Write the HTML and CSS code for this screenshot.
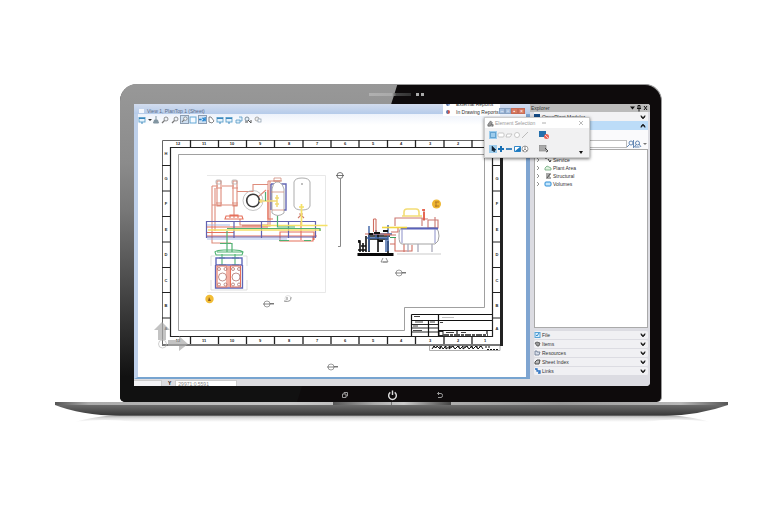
FILE: index.html
```html
<!DOCTYPE html>
<html lang="en">
<head>
<meta charset="utf-8">
<meta name="viewport" content="width=device-width, initial-scale=1">
<title>Plant drawing workspace</title>
<link rel="stylesheet" href="styles.css">
</head>
<body>
<svg class="defs" aria-hidden="true">
  <defs>
    <symbol id="zoom" viewBox="0 0 8 8"><circle cx="5" cy="3" r="2" fill="#eef3f8" stroke="#777" stroke-width=".8"/><path d="M3.500 4.500L1 7" stroke="#777" stroke-width="1.200"/></symbol>
    <symbol id="view" viewBox="0 0 8 8"><rect x="1" y="1.500" width="6" height="4.500" fill="#e8f4fd" stroke="#5b9fcb" stroke-width=".9"/><path d="M1 2.500h6M3 7h2" stroke="#3b87bd"/></symbol>
    <symbol id="chev" viewBox="0 0 6 6"><path d="M1 1.500L3 3.500 5 1.500V3L3 5 1 3z" fill="#111" stroke="#111" stroke-width=".5"/></symbol>
    <symbol id="target" viewBox="0 0 14 8"><circle cx="5" cy="4" r="3" fill="#fff" stroke="#777" stroke-width=".7"/><path d="M1 4h11M8 3.500h4" stroke="#666" stroke-width=".8"/></symbol>
    <symbol id="arrow" viewBox="0 0 4 6"><path d="M1 1l2 2-2 2" fill="none" stroke="#777" stroke-width=".8"/></symbol>
  </defs>
</svg>
<main class="laptop">
  <div class="lid">
    <div class="glare"></div>
    <div class="camera"><span class="speaker"></span><span class="lens"></span><span class="lens"></span></div>
    <div class="screen">
      <div class="desk">
        <section class="window">
          <header class="titlebar"><span class="doc"></span>View 1, PlanTop 1 (Sheet)</header>
          <div class="toolbar">
            <button aria-label="View attributes"><svg><use href="#view"/></svg></button>
            <button class="narrow" aria-label="More views"><svg viewBox="0 0 4 8"><path d="M0 3h4L2 5z" fill="#333"/></svg></button>
            <button aria-label="Brightness"><svg viewBox="0 0 8 8"><path d="M4 0v5M2.500 4h3l1 3h-5z" fill="#8195a1" stroke="#8195a1"/></svg></button>
            <button aria-label="Update view"><svg><use href="#zoom"/></svg></button>
            <button class="gap" aria-label="Zoom in"><svg><use href="#zoom"/></svg></button>
            <button class="on" aria-label="Window area"><svg><use href="#zoom"/></svg></button>
            <button aria-label="Fit view"><svg viewBox="0 0 8 8"><rect x="1" y="1" width="6" height="6" fill="#f4faff" stroke="#65a8d6"/></svg></button>
            <button class="on" aria-label="Rotate view"><svg viewBox="0 0 8 8"><path d="M0 4h3M4 2l2 2-2 2M7 1v5" fill="none" stroke="#2384cf" stroke-width="1.500"/></svg></button>
            <button aria-label="Pan"><svg viewBox="0 0 8 8"><path d="M2 1h2l3 4-2 2-3-1z" fill="#fff" stroke="#666" stroke-width=".8"/></svg></button>
            <button aria-label="Previous view"><svg><use href="#view"/></svg></button>
            <button aria-label="Next view"><svg><use href="#view"/></svg></button>
            <button class="gap" aria-label="Copy view"><svg viewBox="0 0 8 8"><path d="M1 4h4v3H1zM4 1h3v4H5" fill="#dceffc" stroke="#5999c4" stroke-width=".8"/></svg></button>
            <button aria-label="Clip volume"><svg viewBox="0 0 8 8"><circle cx="3" cy="3" r="2" fill="#e4eff8" stroke="#657785" stroke-width=".8"/><path d="M4 4l3 3V4M1 6h3" stroke="#555" fill="none"/></svg></button>
            <button class="gap" aria-label="Clip mask"><svg viewBox="0 0 8 8"><circle cx="3" cy="3" r="2" fill="#eee" stroke="#999" stroke-width=".8"/><rect x="4" y="3" width="3" height="3" fill="#fff" stroke="#89a" stroke-width=".7"/></svg></button>
          </div>
          <svg class="drawing" viewBox="138 125 388 252" role="img" aria-label="Plant sheet drawing">
            <!-- sheet frame -->
            <g fill="none" stroke="#222">
              <path d="M162.500 346V140.500H502" stroke="#666"/>
              <path d="M170.500 147.500H492.500V336.500H170.500z" stroke-width="1.200"/>
              <path d="M162 345H503" stroke="#777" stroke-width="2"/>
              <path d="M501.500 140V346" stroke="#222" stroke-width="3"/>
              <path d="M190.500 140v7M218.500 140v7M246.500 140v7M274.500 140v7M303 140v7M331 140v7M359 140v7M387.500 140v7M415.500 140v7M444 140v7M472 140v7M190.500 337v7M218.500 337v7M246.500 337v7M274.500 337v7M303 337v7M331 337v7M359 337v7M387.500 337v7M415.500 337v7M444 337v7M472 337v7" stroke-width="1.300"/>
              <path d="M162 165.500h8M162 191h8M162 216.500h8M162 242h8M162 267.500h8M162 292.500h8M162 318h8M493 165.500h8M493 191h8M493 216.500h8M493 242h8M493 267.500h8M493 292.500h8M493 318h8"/>
              <path d="M178.500 154.500H484.500V307.500H404.500V330.500H178.500z" stroke="#888" stroke-width=".8"/>
            </g>
            <g class="zone">
              <text x="178" y="145">12</text><text x="204" y="145">11</text><text x="232" y="145">10</text><text x="260" y="145">9</text><text x="289" y="145">8</text><text x="317" y="145">7</text><text x="345" y="145">6</text><text x="373" y="145">5</text><text x="401" y="145">4</text><text x="430" y="145">3</text><text x="458" y="145">2</text><text x="485" y="145">1</text>
              <text x="178" y="342">12</text><text x="204" y="342">11</text><text x="232" y="342">10</text><text x="260" y="342">9</text><text x="289" y="342">8</text><text x="317" y="342">7</text><text x="345" y="342">6</text><text x="373" y="342">5</text><text x="401" y="342">4</text><text x="430" y="342">3</text><text x="458" y="342">2</text><text x="485" y="342">1</text>
              <text x="166" y="155">H</text><text x="166" y="180">G</text><text x="166" y="205">F</text><text x="166" y="231">E</text><text x="166" y="256">D</text><text x="166" y="282">C</text><text x="166" y="307">B</text><text x="166" y="330">A</text>
              <text x="497" y="155">H</text><text x="497" y="180">G</text><text x="497" y="205">F</text><text x="497" y="231">E</text><text x="497" y="256">D</text><text x="497" y="282">C</text><text x="497" y="307">B</text><text x="497" y="330">A</text>
            </g>
            <!-- title block -->
            <g fill="none" stroke="#111">
              <path d="M411.500 314.500H492M411.500 314.500V336M438.500 314.500V336M428.500 320V336M411.500 320.500H438.500M438.500 320.500H492M438.500 330.500H492M457 331v3M487 331v3" stroke-width="1.200"/>
              <path d="M411 324.500h27M411 328h27M411 332h27" stroke-width=".9"/>
              <path d="M414 316.500h6M415 322h8M430 322h5M413 326h5M413 330.500h9M440 322.500h3M446 332.500h8M461 332.500h5" stroke-width=".8"/>
              <path d="M442 317.500h12" stroke="#aaa" stroke-width=".7"/>
              <rect x="439" y="331.500" width="4" height="4" stroke-width=".9"/>
              <path d="M443 335h45" stroke="#555" stroke-width="2" stroke-dasharray="6 1 3 1"/>
              <path d="M429.500 346v4.500H500V346" stroke="#999" stroke-width=".8"/>
              <path d="M432 349l2-3 2 2 1-2 3 3 1-3 2 3 3-3 0 3 4-3-1 3 4-3 2 3 3-3 2 3 3-3 0 3 4-3 2 3 3-3 1 3 3-3 2 3 3-3 2 3" stroke-width="1"/>
              <path d="M434 346v3M439 347h3M445 346v3M450 347h4M459 346v3M464 347h4M471 346v3M476 347h4M485 347h5M487 349.500h11" stroke-dasharray="2 1"/>
            </g>
            <!-- plan view -->
            <g class="plan" fill="none">
              <path d="M207 175.500H325.500V292.500H207" stroke="#e4e4e4"/>
              <g stroke="#d97865" stroke-width="1.100">
                <path d="M212 186h6M222 186h12M234 205V218M217 181h4v25h-4zM233 181h4v25h-4zM216 188h6M232 188h6M216 203h6M232 203h6M212 186v50M215 188v43M212 205h26M237 191.500H253V184.500H268M258 197L266 190M268 181V225H240V219M270 181v45H242M268 181H280M212 236V243H231"/>
                <path d="M207 227H268M207 232.500H234M268 190V219H273M207 236H317M313 236V241H280V232H314V240M301 222V240M226 216h16l1 3h-18zM230 218v-3h8v3" stroke="#e2583f"/>
                <path d="M298 218l3-3 3 3M299 214h4" stroke="#c86854"/>
              </g>
              <g stroke="#999" stroke-width=".7"><rect x="216" y="180" width="5" height="4" rx="1"/><rect x="232" y="180" width="5" height="4" rx="1"/></g>
              <circle cx="253" cy="200.500" r="10" stroke="#aaa" stroke-width=".8"/><circle cx="253" cy="200.500" r="6.300" fill="#fff" stroke="#181818" stroke-width="1.600"/>
              <path d="M271 184H286V210H282M271 184V210" stroke="#4a4ea8" stroke-width="1.400"/>
              <path d="M272 189q1-6 4-7h3q4 2 5 7v24q-6 5-12 0z" fill="#fff" stroke="#888" stroke-width=".8"/>
              <path d="M273 181h9M274 178h7v3h-7zM271 192h13M272 210h12" stroke="#c87966" stroke-width=".8"/>
              <path d="M259 201h18M277 195v12M275 198h4M275 204h4M261 199v4" stroke="#f1d45d" stroke-width="1.500"/>
              <path d="M294 182q1-4 8-4t8 4v24q-1 4-8 4t-8-4z" stroke="#888" stroke-width=".8"/><circle cx="302" cy="184" r=".8" fill="#555"/>
              <path d="M207 221.500H316M207 237H316M206.500 221V238M234 221V238M261.500 221V238M288.500 221V238M315.500 221V238" stroke="#4747a3" stroke-width="1.200"/>
              <path d="M207 239H287M207 225H230" stroke="#90a9e4" stroke-width=".9"/>
              <path d="M208 230H321M262 225.500H327.500M301.500 204V226M299 207h5" stroke="#f4dc4d" stroke-width="1.700"/>
              <path d="M227 228.500H320V231M277.500 216V227H295M265.500 192V201M227 231V252M220 243.500H232V252M279 240.500h10M304 240.500h7" stroke="#35a35b" stroke-width="1.200"/>
              <path d="M215 252q2-2 9-2h10q7 0 9 2l-1 3h-26zM222 254v11M235 254v11M219 265h7M232 265h7M219 258h6M232 258h7M217 252h25" stroke="#32a65b" stroke-width="1.100"/>
              <path d="M216 258h26v7h-26z" stroke="#4852b0" stroke-width="1.400"/>
              <path d="M215.500 265v23H242.500V265" stroke="#444cab" stroke-width="1.300"/>
              <path d="M217 266h10v21h-10zM230.500 266h10v21h-10zM229 266v21" stroke="#e6583d" stroke-width="1.100"/>
              <g stroke="#a25c56" stroke-width=".8"><circle cx="222.500" cy="277" r="4"/><circle cx="236" cy="277" r="4"/><circle cx="219" cy="269" r="1.500"/><circle cx="225.500" cy="269" r="1.500"/><circle cx="233" cy="269" r="1.500"/><circle cx="239" cy="269" r="1.500"/><circle cx="219" cy="284.500" r="1.500"/><circle cx="225.500" cy="284.500" r="1.500"/><circle cx="233" cy="284.500" r="1.500"/><circle cx="239" cy="284.500" r="1.500"/></g>
              <path d="M215 256h-4v10M211 280v10h36v-10M243 256h4v10" stroke="#ccc" stroke-width=".7"/>
            </g>
            <!-- elevation view -->
            <g fill="none">
              <path d="M340.500 179V246.500H338" stroke="#888"/><circle cx="340" cy="175.500" r="3" stroke="#555" stroke-width=".8"/><path d="M336 175.500h8" stroke="#555" stroke-width=".8"/>
              <path d="M357.500 253h36v3h-36z" fill="#080808"/>
              <path d="M358 241h2v11M363 243v9M366 236v16M369 233v19M378 234v18M388 241v12M358 250h8M370 236h20M370 239h18M359 240v3M361 246h5" stroke="#111" stroke-width="1.600"/>
              <path d="M369 226v25M388 225v26M367 238h21M370 234h22M376 230v8M386 238v14" stroke="#3d63a6" stroke-width="1.400"/>
              <path d="M373.500 219v13M376 219v13M373.500 219h2.500M365 234h25M391 232h7v-5M384 235h12M390 244h5v7h8M395 238v13h17v-6M404 242v10" stroke="#cf6d60" stroke-width="1.100"/>
              <path d="M395 226V218H422V226M428 220V228H438V220h-10M424 209v12M422 219h6M435 217v12" stroke="#cb7770" stroke-width="1.100"/>
              <path d="M404 216v-4q0-3 3-3h9q3 0 3 3v4zM402 216h20" stroke="#f3dd76" stroke-width="1.600"/>
              <path d="M422 210h3M424 212v8" stroke="#e64e36" stroke-width="1.500"/>
              <path d="M402 228q-3 0-3 8t3 8h33q4-2 4-8t-3-8z" fill="#fff" stroke="#999" stroke-width=".9"/>
              <path d="M401 228.500h37" stroke="#5961ba" stroke-width="2"/><path d="M402 229v14M435 229v14" stroke="#8b8fc8"/>
              <path d="M382 227.500h25" stroke="#f0d540" stroke-width="1.600"/>
              <path d="M418 244v8M432 244v8M408 244v8" stroke="#aab" stroke-width="1.300"/><path d="M397 254h44" stroke="#ddd" stroke-width="1.500"/>
              <path d="M390 237.500h6" stroke="#3da15f"/>
              <path d="M374 233h6M383 231h5M378 241h5M369 234h4" stroke="#111" stroke-width="2"/>
              <path d="M383 258l-2 4h7l-2-4M383 262h4" stroke="#777" stroke-width=".8"/>
              <circle cx="436.500" cy="204" r="4.500" fill="#eeb631"/><path d="M435 202h4M436 202v5M435 206h4" stroke="#ab7324" stroke-width=".9"/>
            </g>
            <circle cx="209.500" cy="299" r="4.200" fill="#f2bd36"/><path d="M208 301l1-4 2 4z" fill="#8c5d22"/>
            <use href="#target" x="262" y="300" width="14" height="8"/><use href="#target" x="394" y="269" width="14" height="8"/><use href="#target" x="326" y="363" width="14" height="8"/>
            <path d="M284 301q7 2 7-4M287 297v3" fill="none" stroke="#777" stroke-width=".9"/><circle cx="288" cy="298.500" r="3" fill="none" stroke="#ccc" stroke-width=".6"/>
            <!-- coordinate triad -->
            <path d="M162 322l8 8h-4v10h-8v-10h-4zM168 340h11v-4l9 8-9 7v-5h-11z" fill="#aaa" opacity=".7"/><circle cx="162.500" cy="344" r="4" fill="none" stroke="#bbb" opacity=".7"/>
          </svg>
        </section>
        <footer class="status"><span class="tab"></span><label for="coord">Y</label><input id="coord" value="29971:0.5591"></footer>
      </div>
      <aside class="explorer">
        <header class="panel-head"><span>Explorer</span><svg viewBox="0 0 22 8"><path d="M3 2.500h5L5.500 5.500z" fill="#111"/><path d="M11 1.500h2v3h-2zM10 4.500h4M12 4.500v3M17 2l3 4M20 2l-3 4" fill="none" stroke="#111"/></svg></header>
        <button class="model"><span class="logo"></span><span class="label">OpenPlant Modeler</span><svg class="chev"><use href="#chev"/></svg></button>
        <button class="active" aria-label="Collapse model"><svg class="chev up"><use href="#chev"/></svg></button>
        <div class="search"><input type="search" aria-label="Search items"><svg viewBox="0 0 20 8"><g fill="none" stroke="#537cad" stroke-width=".9"><circle cx="4" cy="3" r="2"/><path d="M2.500 4.500L0 7M6.500 0v8"/><circle cx="10.500" cy="3" r="2"/><path d="M9 4.500L7.500 7h5M12 4l2 3"/></g><path d="M16 3h4l-2 2z" fill="#777"/></svg></div>
        <ul class="tree">
          <li><svg class="arrow"><use href="#arrow"/></svg><svg class="ico" viewBox="0 0 8 6"><path d="M1 1h2M4 2l2 3 1-2" fill="none" stroke="#333"/></svg>Service</li>
          <li><svg class="arrow"><use href="#arrow"/></svg><svg class="ico" viewBox="0 0 8 6"><path d="M1 5V3l2-2 2 1 2 1v2z" fill="#dff2df" stroke="#69a77a" stroke-width=".8"/></svg>Plant Area</li>
          <li><svg class="arrow"><use href="#arrow"/></svg><svg class="ico" viewBox="0 0 8 6"><path d="M2 1h5M2 5h5M6 1L3 5M2 3h4" stroke="#555" fill="none"/></svg>Structural</li>
          <li><svg class="arrow"><use href="#arrow"/></svg><svg class="ico" viewBox="0 0 8 6"><rect x="1" y="1" width="6" height="4" rx="1" fill="#c7e7fc" stroke="#2a8cd5"/></svg>Volumes</li>
        </ul>
        <nav class="sections">
          <button><svg class="ico" viewBox="0 0 8 6"><rect x="2" y=".5" width="5" height="5" fill="#d6edfc" stroke="#57a2d6"/><path d="M3 3l1 1 2-3" stroke="#388cc8" fill="none"/></svg><span class="label">File</span><svg class="chev"><use href="#chev"/></svg></button>
          <button><svg class="ico" viewBox="0 0 8 6"><path d="M2 2l2-1 3 1-1 3H4z" fill="#999" stroke="#444" stroke-width=".7"/></svg><span class="label">Items</span><svg class="chev"><use href="#chev"/></svg></button>
          <button><svg class="ico" viewBox="0 0 8 6"><path d="M2 1v4h4l1-3H4V1z" fill="#d7deea" stroke="#66758e" stroke-width=".8"/></svg><span class="label">Resources</span><svg class="chev"><use href="#chev"/></svg></button>
          <button><svg class="ico" viewBox="0 0 8 6"><path d="M2 3v2h4l1-4H4z" fill="#bbb" stroke="#444" stroke-width=".9"/></svg><span class="label">Sheet Index</span><svg class="chev"><use href="#chev"/></svg></button>
          <button><svg class="ico" viewBox="0 0 8 6"><path d="M2 1h2v2h3v2H5" fill="none" stroke="#286fc1" stroke-width="1.300"/></svg><span class="label">Links</span><svg class="chev"><use href="#chev"/></svg></button>
        </nav>
      </aside>
      <div class="menu"><button tabindex="-1"><span class="mark blue"></span>External Reports</button><button><span class="mark"></span>In Drawing Reports</button></div>
      <div class="winctl"><button aria-label="Minimize">–</button><button aria-label="Restore">▫</button><button class="hot" aria-label="Maximize">▪</button><button class="hot" aria-label="Close">×</button></div>
      <section class="palette">
        <header><svg viewBox="0 0 8 8"><path d="M1 7V5l3-4 2 2-2 4zM5 5h2v2H5" fill="#999" stroke="#555" stroke-width=".7"/></svg><span class="label">Element Selection</span><button aria-label="Minimize palette"><svg viewBox="0 0 6 6"><path d="M1 3h4" stroke="#999" stroke-width=".8"/></svg></button><button aria-label="Close palette"><svg viewBox="0 0 6 6"><path d="M1 1l4 4M5 1L1 5" stroke="#aaa" stroke-width=".8"/></svg></button></header>
        <div class="tools">
          <button class="pick" aria-label="Individual"><svg viewBox="0 0 8 8"><path d="M1.500 1.500h5v5h-5z" fill="none" stroke="#287bb7" stroke-dasharray="1 1"/></svg></button>
          <button aria-label="Block"><svg viewBox="0 0 8 8"><rect x="1" y="2" width="6" height="4" rx="1" fill="#fff" stroke="#bbb" stroke-width=".8"/></svg></button>
          <button aria-label="Shape"><svg viewBox="0 0 8 8"><path d="M1 6l1-3h5L5 6z" fill="#fff" stroke="#bbb" stroke-width=".8"/></svg></button>
          <button aria-label="Circle"><svg viewBox="0 0 8 8"><circle cx="4" cy="4" r="2.500" fill="#fff" stroke="#bbb" stroke-width=".8"/></svg></button>
          <button aria-label="Line"><svg viewBox="0 0 8 8"><path d="M1 7l6-6" stroke="#bbb"/></svg></button>
          <button class="far" aria-label="Disable handles"><svg viewBox="0 0 10 8"><path d="M0 0h7v6H0z" fill="#236fad"/><circle cx="7.500" cy="5.500" r="2.500" fill="#e96359"/><path d="M6 4l3 3" stroke="#fff" stroke-width=".7"/></svg></button>
        </div>
        <div class="tools">
          <button class="pick" aria-label="New"><svg viewBox="0 0 8 8"><path d="M3 1v5l1-1 1 2 1-1-1-1h2z" fill="#123" stroke="#123" stroke-width=".5"/></svg></button>
          <button aria-label="Add"><svg viewBox="0 0 8 8"><path d="M1 4h6M4 1v6" stroke="#176fb4" stroke-width="2"/></svg></button>
          <button aria-label="Subtract"><svg viewBox="0 0 8 8"><path d="M1 4h6" stroke="#176fb4" stroke-width="1.600"/></svg></button>
          <button aria-label="Invert"><svg viewBox="0 0 8 8"><path d="M1.500 1.500h6v5h-6z" fill="#fff" stroke="#3388c9"/><path d="M7.500 1.500v5h-6z" fill="#1b79bf"/></svg></button>
          <button aria-label="Select all"><svg viewBox="0 0 8 8"><circle cx="4" cy="4" r="3" fill="#fff" stroke="#888" stroke-width=".8"/><path d="M4 1v3L2 6M4 4l2 2" fill="none" stroke="#777" stroke-width=".8"/></svg></button>
          <button class="far" aria-label="Highlight"><svg viewBox="0 0 10 8"><path d="M0 0h7v6H0z" fill="#aaa" stroke="#888" stroke-width=".7"/><path d="M6 3l3 3-2 1" fill="none" stroke="#444"/></svg></button>
          <button class="more" aria-label="Show more"><svg viewBox="0 0 6 6"><path d="M1 2h4L3 5z" fill="#111"/></svg></button>
        </div>
      </section>
    </div>
    <div class="keys" aria-hidden="true">
      <svg viewBox="0 0 8 8"><path d="M1.500 3h3.500v3.500H1.500zM3 3V1.500h3.500V5H5" fill="none" stroke="#999"/></svg>
      <svg class="power" viewBox="0 0 10 10"><path d="M3 2.200a3.500 3.500 0 1 0 4 0M5 .5v4" fill="none" stroke="#ddd" stroke-width="1.300"/></svg>
      <svg viewBox="0 0 8 8"><path d="M3 1L1.500 2.500 3 4M1.500 2.500H5q1.500 0 1.500 2T5 6.500H2" fill="none" stroke="#999"/></svg>
    </div>
  </div>
  <svg class="base" viewBox="0 0 673 22" preserveAspectRatio="none" aria-hidden="true">
    <defs>
      <linearGradient id="edge"><stop offset="0" stop-color="#555"/><stop offset=".05" stop-color="#aaa"/><stop offset=".35" stop-color="#c8c8c8"/><stop offset=".75" stop-color="#999"/><stop offset=".93" stop-color="#b8b8b8"/><stop offset="1" stop-color="#555"/></linearGradient>
      <linearGradient id="body" x2="0" y2="1"><stop offset="0" stop-color="#777"/><stop offset=".35" stop-color="#636363"/><stop offset=".9" stop-color="#3c3c3c"/><stop offset="1" stop-color="#777"/></linearGradient>
      <linearGradient id="notch"><stop offset="0" stop-color="#555"/><stop offset=".35" stop-color="#aaa"/><stop offset=".6" stop-color="#ccc"/><stop offset="1" stop-color="#444"/></linearGradient>
      <linearGradient id="shade" x2="0" y2="1"><stop offset="0" stop-color="#888"/><stop offset=".5" stop-color="#ddd"/><stop offset="1" stop-color="#fff"/></linearGradient>
    </defs>
    <path d="M20 20Q40 14 75 12H600Q635 14 655 20Q620 15 590 20H80Q50 16 20 20z" fill="url(#shade)"/>
    <path d="M0 0H673V3Q645 13 610 14H65Q25 13 0 3z" fill="url(#body)"/>
    <path d="M0 0H673V3H0z" fill="url(#edge)"/><path d="M278 0H396V3H278z" fill="url(#notch)"/><path d="M336.500 0v3" stroke="#777"/>
  </svg>
</main>
</body>
</html>
```
FILE: styles.css
```css
* { box-sizing: border-box; }
body { margin: 0; padding: 84px 54px 0 55px; background: #fff; color: #333; font: 5px/8px "Liberation Sans", sans-serif; }
button, input { font: inherit; color: inherit; margin: 0; padding: 0; border: 0; background: none; min-width: 0; }
svg { display: block; }
.defs { position: absolute; width: 0; height: 0; }

.lid { position: relative; margin: 0 66px 0 65px; padding: 19px 11px 0 14px; background: #0e0b0c; border: solid #999; border-width: 1px 1px 0 0; border-radius: 17px 17px 5px 5px; }
.glare { position: absolute; inset: -1px 0 0 0; border-radius: inherit; background: linear-gradient(#989898, #8b8b8b 25%, #777 40%, #333 75%, #111 92%); clip-path: polygon(0 0, 51.3% 0, 32.7% 100%, 0 100%); }
.camera { position: absolute; top: 8px; left: 46%; display: flex; align-items: center; gap: 2px; }
.speaker { width: 42px; height: 3px; margin-right: 3px; background: linear-gradient(90deg, #b0b0b0, #aaa 55%, #444 65%, #333); }
.lens { width: 3px; height: 3px; background: #aaa; }
.screen { position: relative; display: grid; grid-template-columns: 1fr 120px; background: #dcdce0; border-radius: 2px 3px 4px 3px; }
.desk { display: flex; flex-direction: column; min-width: 0; }
.window { border: solid #bed0ea; border-width: 0 4px 2px; border-right-color: #7fa5d1; border-bottom-color: #77a4d0; background: #fff; }
.titlebar { display: flex; align-items: center; gap: 3px; height: 10px; padding: 4px 0 0 5px; margin: 0 -4px; background: linear-gradient(#d2dcee, #b5cbea); color: #596b87; }
.doc { width: 5px; height: 4px; background: #f4f7fc; }
.toolbar { display: flex; align-items: center; height: 11px; background: linear-gradient(#edf2fb, #fff); }
.toolbar button { width: 9px; height: 9px; }
.toolbar svg { width: 8px; height: 8px; }
.toolbar .narrow { width: 5px; padding-left: 1px; }
.toolbar .narrow svg { width: 4px; }
.toolbar .gap { margin-left: 1px; }
.toolbar .on { background: #cfe0f2; border: 1px solid #8d9db1; }
.toolbar .on svg { width: 7px; height: 7px; }
.drawing { width: 100%; height: auto; }
.plan { opacity: .85; }
.zone text { font-size: 4px; font-weight: bold; text-anchor: middle; fill: #222; }
.status { display: flex; align-items: center; gap: 4px; height: 7px; padding-top: 1px; color: #888; }
.status .tab { width: 28px; height: 6px; background: #f4f4f6; border: 1px solid #ccc; border-width: 1px 1px 0 0; }
.status label { margin-left: 2px; color: #111; font-weight: bold; }
.status input { width: 62px; height: 6px; line-height: 6px; background: #fff; border: 1px solid #ccc; border-bottom: 0; padding-left: 2px; }

.explorer { display: flex; flex-direction: column; padding: 0 2px 10px 4px; background: #dcdce2; border-radius: 0 3px 4px 0; }
.panel-head { display: flex; justify-content: space-between; height: 8px; margin: 0 -2px 0 -4px; padding: 0 1px; background: #bbb; border-radius: 0 3px 0 0; }
.panel-head svg { width: 22px; height: 8px; }
.model, .active, .sections button { display: flex; align-items: center; width: 100%; height: 9px; text-align: left; }
.model { background: #f2f2f4; }
.logo { width: 6px; height: 6px; margin: 0 2px 0 0; background: #174b85; }
.label { flex: 1; white-space: nowrap; }
.chev { width: 6px; height: 6px; margin-right: 2px; }
.up { transform: rotate(180deg); margin-left: auto; }
.active { background: #bcdcf8; }
.search { display: flex; align-items: center; height: 19px; padding: 9px 1px 1px 0; background: #fafafc; }
.search input { flex: 1; height: 8px; border: 1px solid #bbb; background: #fff; appearance: none; }
.search svg { width: 20px; height: 8px; }
.tree { flex: 1; list-style: none; margin: 0 0 3px; padding: 6px 1px; background: #fff; border: 1px solid #aaa; }
.tree li { display: flex; align-items: center; height: 8px; }
.arrow { width: 4px; height: 6px; margin-right: 4px; }
.ico { width: 8px; height: 6px; margin-right: 1px; }
.sections button { background: #f0f0f3; border-bottom: 1px solid #dcdce2; border-radius: 2px; }
.sections .ico { margin-left: -1px; }

.menu { position: absolute; top: 0; right: 150px; width: 57px; height: 12px; overflow: hidden; display: flex; flex-direction: column; justify-content: flex-end; background: #fff; }
.menu button { display: flex; flex: none; align-items: center; height: 8px; gap: 6px; padding-left: 3px; white-space: nowrap; }
.mark { width: 4px; height: 4px; border-radius: 2px; background: #c8544f; border-left: 2px solid #6476a5; }
.mark.blue { background: #87a8d9; }
.winctl { position: absolute; top: 4px; right: 125px; display: flex; }
.winctl button { width: 6px; height: 6px; line-height: 5px; background: #a7c0e0; border: 1px solid #8ba4c4; color: #fff; }
.winctl .hot { width: 7px; background: #d9785f; border-color: #c56b56; }
.palette { position: absolute; top: 13px; right: 60px; width: 106px; height: 41px; padding: 0 3px; background: #f1f1f2; border: 1px solid #ccc; box-shadow: 0 1px 3px #0008; color: #999; }
.palette header { display: flex; align-items: center; height: 10px; margin: 0 -3px; padding: 0 5px 0 2px; background: #fff; }
.palette header > svg { width: 7px; height: 7px; margin-right: 1px; }
.palette header .label { flex: none; width: 46px; }
.palette header button svg { width: 6px; height: 6px; }
.palette header button:last-child { margin-left: auto; }
.tools { display: flex; align-items: center; height: 14px; margin-left: 1px; }
.tools button { width: 8px; height: 8px; }
.tools svg { width: 8px; height: 8px; }
.tools .pick { background: #9dccec; }
.tools .far { width: 10px; margin-left: 10px; }
.tools .far svg { width: 10px; }
.tools .more { margin-left: auto; align-self: flex-end; }
.tools .more svg { width: 6px; height: 6px; }

.keys { position: relative; display: flex; justify-content: center; align-items: center; gap: 38px; height: 16px; padding-top: 2px; }
.keys svg { width: 8px; height: 8px; }
.keys .power { width: 11px; height: 11px; }
.base { width: 100%; height: 22px; }
```
